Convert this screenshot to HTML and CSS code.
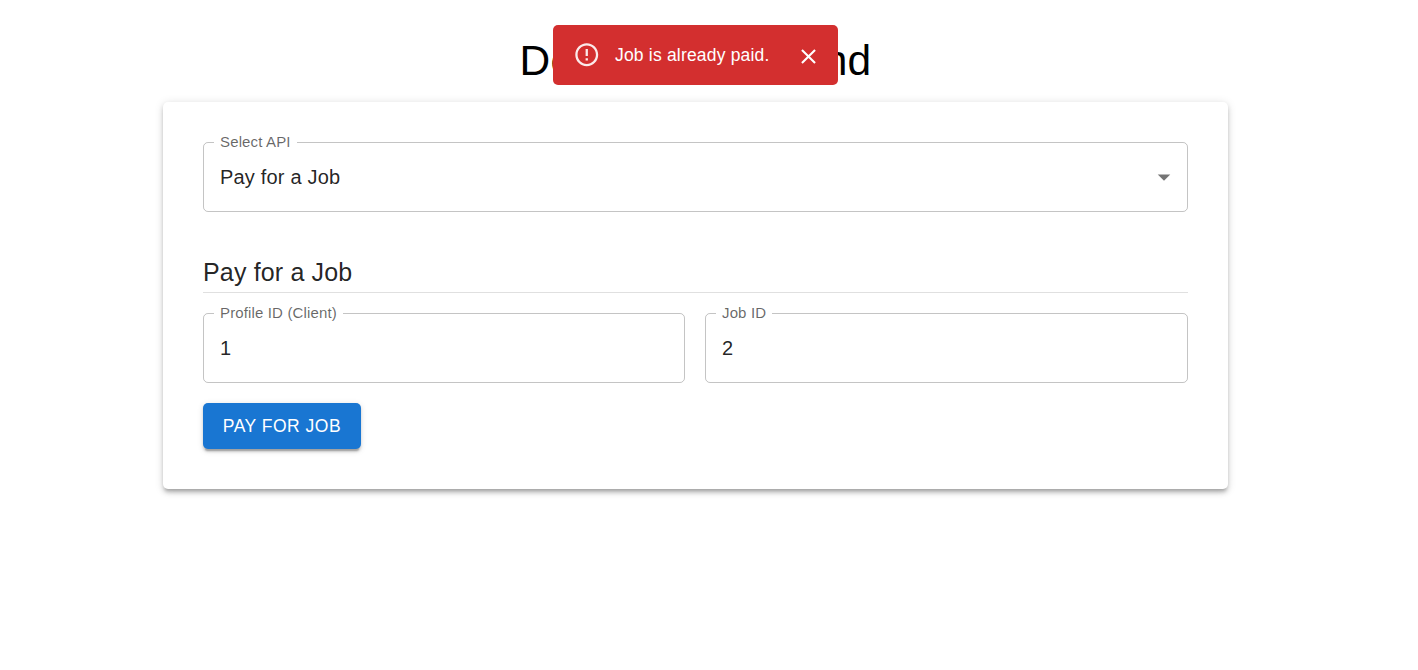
FILE: index.html
```html
<!DOCTYPE html>
<html lang="en">
<head>
<meta charset="utf-8">
<title>Deel API Frontend</title>
<link rel="stylesheet" href="styles.css">
</head>
<body>
<main class="container">
  <h1 class="title">Deel API Frontend</h1>
  <section class="card">
    <div class="field">
      <span class="label">Select API</span>
      <span class="value">Pay for a Job</span>
      <svg class="arrow" viewBox="0 0 24 24"><path d="M7 10l5 5 5-5z"/></svg>
    </div>
    <h2 class="heading">Pay for a Job</h2>
    <div class="row">
      <div class="field">
        <span class="label">Profile ID (Client)</span>
        <span class="value">1</span>
      </div>
      <div class="field">
        <span class="label">Job ID</span>
        <span class="value">2</span>
      </div>
    </div>
    <button class="button" type="button">PAY FOR JOB</button>
  </section>
</main>
<div class="alert" role="alert">
  <svg class="alert-icon" viewBox="0 0 24 24"><path d="M11 15h2v2h-2zm0-8h2v6h-2zm.99-5C6.47 2 2 6.48 2 12s4.47 10 9.99 10C17.52 22 22 17.52 22 12S17.52 2 11.99 2zM12 20c-4.42 0-8-3.58-8-8s3.58-8 8-8 8 3.58 8 8-3.58 8-8 8z"/></svg>
  <span class="alert-text">Job is already paid.</span>
  <svg class="alert-close" viewBox="0 0 24 24"><path d="M19 6.41L17.59 5 12 10.59 6.41 5 5 6.41 10.59 12 5 17.59 6.41 19 12 13.41 17.59 19 19 17.59 13.41 12z"/></svg>
</div>
</body>
</html>
```

FILE: styles.css
```css
* {
  box-sizing: border-box;
}

body {
  min-height: 100vh;
  margin: 0;
  background: #fff;
  color: rgba(0, 0, 0, 0.87);
  font-family: "Liberation Sans", Arial, sans-serif;
}

.container {
  width: 1065px;
  min-height: 670px;
  margin-left: 163px;
  padding-top: 35px;
}

.title {
  margin: 0 0 14px;
  color: #000;
  font-size: 42.5px;
  font-weight: 400;
  line-height: 52.5px;
  letter-spacing: 0.0065em;
  text-align: center;
}

.card {
  height: 387.5px;
  padding: 40.5px 40px 40px;
  background: #fff;
  border-radius: 5px;
  box-shadow: 0 3.75px 3.75px -2.5px rgba(0, 0, 0, 0.2), 0 3.75px 5px 0 rgba(0, 0, 0, 0.14), 0 1.25px 10px 0 rgba(0, 0, 0, 0.12);
}

.field {
  position: relative;
  display: flex;
  justify-content: space-between;
  height: 70px;
  padding: 20px 10px 0 16px;
  border: 1px solid rgba(0, 0, 0, 0.23);
  border-radius: 5px;
}

.label {
  position: absolute;
  top: -10px;
  left: 10px;
  padding: 0 6px;
  background: #fff;
  color: rgba(0, 0, 0, 0.6);
  font-size: 15px;
  line-height: 18px;
  letter-spacing: 0.00938em;
}

.value {
  font-size: 20px;
  line-height: 29px;
  letter-spacing: 0.00938em;
}

.arrow {
  width: 30px;
  height: 30px;
  margin: -1px -2px 0 0;
  fill: rgba(0, 0, 0, 0.54);
}

.heading {
  height: 41px;
  margin: 40px 0 20px;
  border-bottom: 1px solid rgba(0, 0, 0, 0.12);
  font-size: 25px;
  font-weight: 400;
  line-height: 40px;
  letter-spacing: 0.0065em;
}

.row {
  display: grid;
  grid-template-columns: 482px 1fr;
  gap: 20px;
}

.button {
  display: block;
  width: 158px;
  height: 46px;
  margin-top: 20px;
  padding: 0;
  border: 0;
  border-radius: 5px;
  background: #1976d2;
  color: #fff;
  font-family: inherit;
  font-size: 17.5px;
  line-height: 46px;
  letter-spacing: 0.02857em;
  box-shadow: 0 3.75px 1.25px -2.5px rgba(0, 0, 0, 0.2), 0 2.5px 2.5px 0 rgba(0, 0, 0, 0.14), 0 1.25px 6.25px 0 rgba(0, 0, 0, 0.12);
}

.alert {
  position: absolute;
  top: 25px;
  left: 552.5px;
  display: flex;
  align-items: center;
  width: 285px;
  height: 60px;
  padding: 0 17px 0 20px;
  border-radius: 5px;
  background: #d32f2f;
  color: #fff;
}

.alert-icon {
  width: 27.5px;
  height: 27.5px;
  margin-right: 15px;
  fill: rgba(255, 255, 255, 0.9);
}

.alert-text {
  flex: 1;
  font-size: 17.5px;
  line-height: 25px;
  letter-spacing: 0.01071em;
  white-space: nowrap;
}

.alert-close {
  width: 25px;
  height: 25px;
  margin-top: 3px;
  fill: #fff;
}
```
